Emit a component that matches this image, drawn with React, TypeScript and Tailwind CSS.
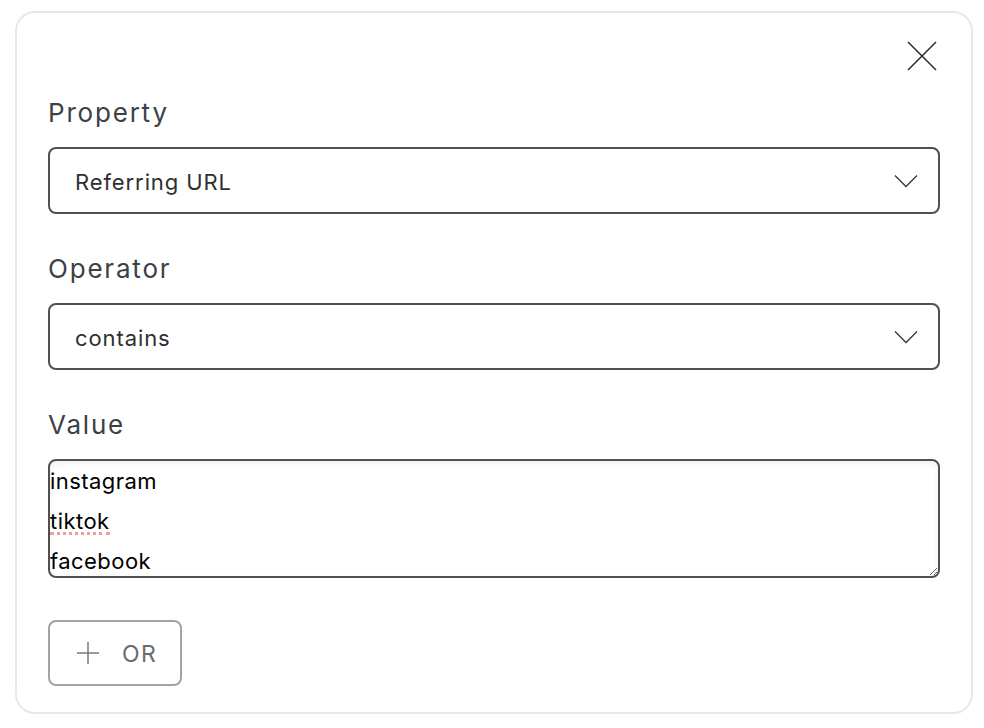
import { useState } from "react";

function Chevron() {
  return (
    <svg width="24" height="14" viewBox="0 0 24 14" fill="none" className="shrink-0">
      <path d="M1 1.5L12 12.5L23 1.5" stroke="#3a3a3a" strokeWidth="1.4" />
    </svg>
  );
}

function SelectBox({ value }: { value: string }) {
  return (
    <div className="mt-5 h-[67px] flex items-center justify-between rounded-lg border-2 border-[#505050] pl-[25px] pr-[20px] bg-white">
      <span className="pt-[3px] text-[22px] text-[#2f2f2f] tracking-[0.9px]">{value}</span>
      <Chevron />
    </div>
  );
}

export default function App() {
  const [text, setText] = useState("instagram\ntiktok\nfacebook");

  return (
    <div className="w-[984px] h-[728px] bg-white pt-[11px] pl-[15px]" style={{ fontFamily: "Inter, 'Noto Sans', sans-serif" }}>
      <div className="w-[958px] h-[703px] rounded-[20px] border-2 border-[#e8e8e8] px-[31px] pt-[27px]">
        {/* close */}
        <div className="flex justify-end pr-[2px]">
          <button className="w-[32px] h-[32px] flex items-center justify-center">
            <svg width="32" height="32" viewBox="0 0 32 32" fill="none">
              <path d="M2 2L30 30M30 2L2 30" stroke="#2a2a2a" strokeWidth="1.5" />
            </svg>
          </button>
        </div>

        <div className="mt-[23px] pt-[2px] h-[32px] text-[26px] leading-[32px] text-[#3c4146] tracking-[1.8px]">Property</div>
        <SelectBox value="Referring URL" />

        <div className="mt-[37px] pt-[2px] h-[32px] text-[26px] leading-[32px] text-[#3c4146] tracking-[1.8px]">Operator</div>
        <SelectBox value="contains" />

        <div className="mt-[37px] pt-[2px] h-[32px] text-[26px] leading-[32px] text-[#3c4146] tracking-[1.8px]">Value</div>
        <div className="relative mt-5">
          <textarea
            value={text}
            onChange={(e) => setText(e.target.value)}
            spellCheck={false}
            className="block w-full h-[119px] rounded-lg border-2 border-[#505050] p-0 text-[22px] leading-[40px] tracking-[0.45px] text-black shadow-[inset_0_3px_6px_rgba(0,0,0,0.06)] outline-none resize-y"
          />
          <div className="absolute left-[2px] top-[73px] w-[60px] border-b-[3px] border-dotted border-[#f39a9a]" />
        </div>

        <button className="mt-[42px] w-[134px] h-[66px] rounded-lg border-2 border-[#a3a3a3] flex items-center justify-center gap-[23px] pl-[4px] text-[#6b6b6b]">
          <svg width="22" height="22" viewBox="0 0 22 22" fill="none">
            <path d="M11 0V22M0 11H22" stroke="#7a7a7a" strokeWidth="1.5" />
          </svg>
          <span className="pt-[2px] text-[23px] tracking-[1.2px]">OR</span>
        </button>
      </div>
    </div>
  );
}
